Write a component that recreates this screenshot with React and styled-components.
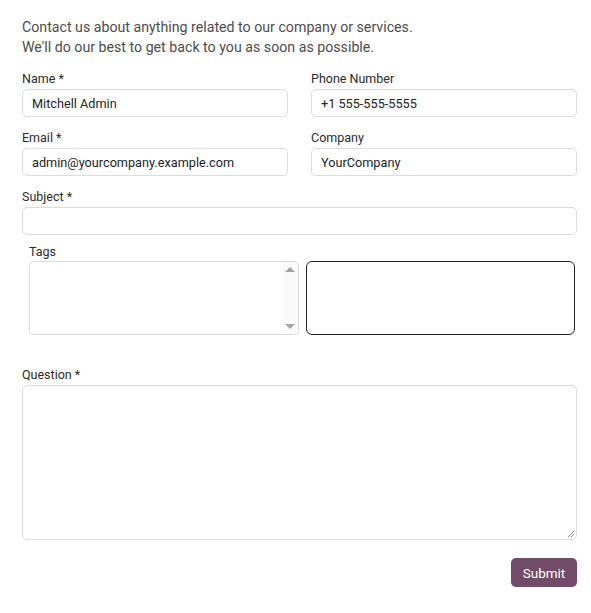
import React from "react";
import styled, { createGlobalStyle } from "styled-components";

const Global = createGlobalStyle`
  html, body { margin: 0; padding: 0; background: #fff; }
  body { font-family: Roboto, "Liberation Sans", sans-serif; color: #212529; }
  * { box-sizing: border-box; }
`;

const Page = styled.div`
  padding: 17px 14px 20px 22px;
  display: flex;
  flex-direction: column;
`;

const Intro = styled.p`
  margin: 0 0 14px;
  font-size: 14.2px;
  line-height: 20px;
  font-weight: 400;
  color: #4d4d4d;
`;

const Grid = styled.div`
  display: grid;
  grid-template-columns: 1fr 1fr;
  column-gap: 23px;
  row-gap: 13px;
`;

const Field = styled.div`
  display: flex;
  flex-direction: column;
  gap: 2px;
  margin-top: ${(p) => p.$mt || 0}px;
`;

const Label = styled.label`
  font-size: 12.5px;
  line-height: 16px;
  color: #2b2b2b;
`;

const Input = styled.div`
  height: 28px;
  border: 1px solid #dcdcdc;
  border-radius: 5px;
  padding: 0 9px;
  display: flex;
  align-items: center;
  font-size: 12.7px;
  color: #212529;
`;

const TagsBlock = styled.div`
  margin-top: 9px;
  padding: 0 2px 0 7px;
  display: flex;
  flex-direction: column;
  gap: 1px;
`;

const TagsRow = styled.div`
  display: grid;
  grid-template-columns: 1fr 1fr;
  gap: 7px;
`;

const SelectBox = styled.div`
  height: 74px;
  border: 1px solid #dcdcdc;
  border-radius: 4px;
  display: flex;
  justify-content: flex-end;
  overflow: hidden;
`;

const Track = styled.div`
  width: 15px;
  background: #fafafa;
  display: flex;
  flex-direction: column;
  justify-content: space-between;
  align-items: center;
  padding: 5px 0;
`;

const Arrow = styled.div`
  width: 0;
  height: 0;
  border-left: 5px solid transparent;
  border-right: 5px solid transparent;
  ${(p) =>
    p.$up
      ? "border-bottom: 5px solid #a3a3a3;"
      : "border-top: 5px solid #a3a3a3;"}
`;

const FocusBox = styled.div`
  height: 74px;
  border: 1.5px solid #222;
  border-radius: 6px;
`;

const TextArea = styled.div`
  position: relative;
  height: 155px;
  border: 1px solid #dcdcdc;
  border-radius: 5px;
`;

const Grip = styled.svg`
  position: absolute;
  right: 1px;
  bottom: 1px;
`;

const Actions = styled.div`
  display: flex;
  justify-content: flex-end;
  margin-top: 18px;
`;

const Button = styled.button`
  height: 29px;
  width: 66px;
  border: none;
  border-radius: 5px;
  background: #714b67;
  color: #fff;
  font-family: Roboto, "Liberation Sans", sans-serif;
  font-size: 13.5px;
  padding: 0;
`;

export default function App() {
  return (
    <>
      <Global />
      <Page>
        <Intro>
          Contact us about anything related to our company or services.
          <br />
          We'll do our best to get back to you as soon as possible.
        </Intro>
        <Grid>
          <Field>
            <Label>Name *</Label>
            <Input>Mitchell Admin</Input>
          </Field>
          <Field>
            <Label>Phone Number</Label>
            <Input>+1 555-555-5555</Input>
          </Field>
          <Field>
            <Label>Email *</Label>
            <Input>admin@yourcompany.example.com</Input>
          </Field>
          <Field>
            <Label>Company</Label>
            <Input>YourCompany</Input>
          </Field>
        </Grid>
        <Field $mt={13}>
          <Label>Subject *</Label>
          <Input />
        </Field>
        <TagsBlock>
          <Label>Tags</Label>
          <TagsRow>
            <SelectBox>
              <Track>
                <Arrow $up />
                <Arrow />
              </Track>
            </SelectBox>
            <FocusBox />
          </TagsRow>
        </TagsBlock>
        <Field $mt={32}>
          <Label>Question *</Label>
          <TextArea>
            <Grip width="9" height="9" viewBox="0 0 9 9">
              <path d="M8 2 L2 8 M8 5 L5 8" stroke="#888" strokeWidth="1" />
            </Grip>
          </TextArea>
        </Field>
        <Actions>
          <Button>Submit</Button>
        </Actions>
      </Page>
    </>
  );
}
